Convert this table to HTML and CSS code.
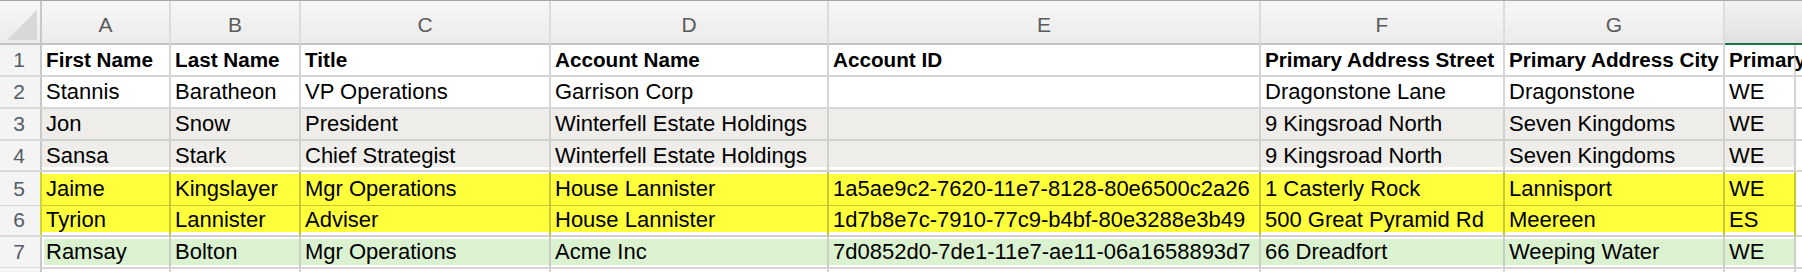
FILE: index.html
```html
<!DOCTYPE html>
<html>
<head>
<meta charset="utf-8">
<link rel="stylesheet" href="styles.css">
</head>
<body>
<div class="sheet">
  <div class="row hdr">
    <div class="rh corner"><span class="tri"></span></div>
    <div class="col">A</div>
    <div class="col">B</div>
    <div class="col">C</div>
    <div class="col">D</div>
    <div class="col">E</div>
    <div class="col">F</div>
    <div class="col">G</div>
    <div class="col sel"></div>
  </div>

  <div class="row r1 bold">
    <div class="rh">1</div>
    <div class="c">First Name</div>
    <div class="c">Last Name</div>
    <div class="c">Title</div>
    <div class="c">Account Name</div>
    <div class="c">Account ID</div>
    <div class="c">Primary Address Street</div>
    <div class="c">Primary Address City</div>
    <div class="c">Primary</div>
    <div class="c fill"></div>
  </div>

  <div class="row r2">
    <div class="rh">2</div>
    <div class="c">Stannis</div>
    <div class="c">Baratheon</div>
    <div class="c">VP Operations</div>
    <div class="c">Garrison Corp</div>
    <div class="c"></div>
    <div class="c">Dragonstone Lane</div>
    <div class="c">Dragonstone</div>
    <div class="c">WE</div>
    <div class="c fill"></div>
  </div>

  <div class="row r3 gray">
    <div class="rh">3</div>
    <div class="c">Jon</div>
    <div class="c">Snow</div>
    <div class="c">President</div>
    <div class="c">Winterfell Estate Holdings</div>
    <div class="c"></div>
    <div class="c">9 Kingsroad North</div>
    <div class="c">Seven Kingdoms</div>
    <div class="c">WE</div>
    <div class="c fill"></div>
  </div>

  <div class="row r4 gray gap-bottom">
    <div class="rh">4</div>
    <div class="c">Sansa</div>
    <div class="c">Stark</div>
    <div class="c">Chief Strategist</div>
    <div class="c">Winterfell Estate Holdings</div>
    <div class="c"></div>
    <div class="c">9 Kingsroad North</div>
    <div class="c">Seven Kingdoms</div>
    <div class="c">WE</div>
    <div class="c fill"></div>
  </div>

  <div class="row r5 yellow gap-top">
    <div class="rh">5</div>
    <div class="c">Jaime</div>
    <div class="c">Kingslayer</div>
    <div class="c">Mgr Operations</div>
    <div class="c">House Lannister</div>
    <div class="c">1a5ae9c2-7620-11e7-8128-80e6500c2a26</div>
    <div class="c">1 Casterly Rock</div>
    <div class="c">Lannisport</div>
    <div class="c">WE</div>
    <div class="c fill"></div>
  </div>

  <div class="row r6 yellow last-yellow">
    <div class="rh">6</div>
    <div class="c">Tyrion</div>
    <div class="c">Lannister</div>
    <div class="c">Adviser</div>
    <div class="c">House Lannister</div>
    <div class="c">1d7b8e7c-7910-77c9-b4bf-80e3288e3b49</div>
    <div class="c">500 Great Pyramid Rd</div>
    <div class="c">Meereen</div>
    <div class="c">ES</div>
    <div class="c fill"></div>
  </div>

  <div class="row r7 green">
    <div class="rh">7</div>
    <div class="c first">Ramsay</div>
    <div class="c">Bolton</div>
    <div class="c">Mgr Operations</div>
    <div class="c">Acme Inc</div>
    <div class="c">7d0852d0-7de1-11e7-ae11-06a1658893d7</div>
    <div class="c">66 Dreadfort</div>
    <div class="c">Weeping Water</div>
    <div class="c">WE</div>
    <div class="c fill"></div>
  </div>

  <div class="row r8">
    <div class="rh"></div>
    <div class="c"></div>
    <div class="c"></div>
    <div class="c"></div>
    <div class="c"></div>
    <div class="c"></div>
    <div class="c"></div>
    <div class="c"></div>
    <div class="c"></div>
    <div class="c fill"></div>
  </div>
</div>
</body>
</html>
```

FILE: styles.css
```css
html, body {
  margin: 0;
  padding: 0;
  background: #ffffff;
  overflow: hidden;
}

body {
  width: 1802px;
  height: 272px;
  font-family: "Liberation Sans", Arial, sans-serif;
  color: #000;
}

.sheet {
  width: 1802px;
  height: 272px;
  overflow: hidden;
  border-top: 1px solid #a6a6a6;
  box-sizing: border-box;
}

.row {
  display: grid;
  grid-template-columns: 42px 129px 130px 250px 278px 432px 244px 220px 71px 6px;
}

/* column header row */
.hdr {
  height: 44px;
}

.hdr > div {
  box-sizing: border-box;
  border-bottom: 2px solid #c3c3c3;
  border-right: 2px solid #dcdcdc;
  background: linear-gradient(#f7f7f7, #ebebeb);
}

.hdr .col {
  text-align: center;
  font-size: 21px;
  color: #5a5a5a;
  padding-top: 7px;
  line-height: 34px;
}

.hdr .sel {
  grid-column: span 2;
  border-right: none;
  border-bottom: 2px solid #1f7244;
  background: linear-gradient(#f3f3f3, #e0e0e0);
}

.hdr .corner {
  border-right: 2px solid #c8c8c8;
  display: flex;
  justify-content: flex-end;
  align-items: flex-end;
  padding: 0 3px 3px 0;
}

.tri {
  display: block;
  width: 30px;
  height: 30px;
  background: #d8d8d8;
  clip-path: polygon(100% 0, 100% 100%, 0 100%);
}

/* row headers */
.rh {
  box-sizing: border-box;
  border-right: 2px solid #c8c8c8;
  border-bottom: 2px solid #dadada;
  background: #f4f4f4;
  text-align: center;
  font-size: 21px;
  font-weight: normal;
  color: #555b63;
  padding-right: 2px;
}

/* cells */
.c {
  box-sizing: border-box;
  border-right: 2px solid #d6d6d6;
  border-bottom: 2px solid #d6d6d6;
  padding-left: 4px;
  white-space: nowrap;
  font-size: 22px;
}

.c.fill {
  border-right: none;
  padding: 0;
}

.bold .c {
  font-weight: bold;
  font-size: 20.7px;
}

.r1 { height: 32px; line-height: 30px; }
.r2 { height: 32px; line-height: 30px; }
.r3 { height: 32px; line-height: 30px; }
.r4 { height: 31px; line-height: 29px; }
.r5 { height: 34px; line-height: 33px; }
.r6 { height: 31px; line-height: 28px; }
.r7 { height: 31px; line-height: 30px; }
.r8 { height: 4px; }

.r8 .rh, .r8 .c {
  border-bottom: none;
}

/* gray rows */
.gray .c:not(.fill) {
  background: #eeede9;
  border-color: #d0d0d0;
}

.gap-bottom .c:not(.fill) {
  box-shadow: inset 0 -3px 0 #ffffff;
}

/* yellow rows */
.yellow .c:not(.fill) {
  background: #ffff3b;
  border-right-color: #c8c832;
  border-bottom-color: #c8c832;
}

.yellow .rh {
  border-right-color: #d2d236;
}

.gap-top .c:not(.fill) {
  box-shadow: inset 0 2px 0 #ffffff;
}

.last-yellow .c:not(.fill) {
  border-bottom-color: #d0d0d0;
  box-shadow: inset 0 -3px 0 #ffffff;
}

/* green row */
.green .c:not(.fill) {
  background: #daf2d0;
  border-right-color: #c9cfc6;
  box-shadow: inset 0 2px 0 #ffffff, inset 0 -2px 0 #ffffff;
}

.green .c.first {
  box-shadow: inset 2px 0 0 #ffffff, inset 0 2px 0 #ffffff, inset 0 -2px 0 #ffffff;
}
```
